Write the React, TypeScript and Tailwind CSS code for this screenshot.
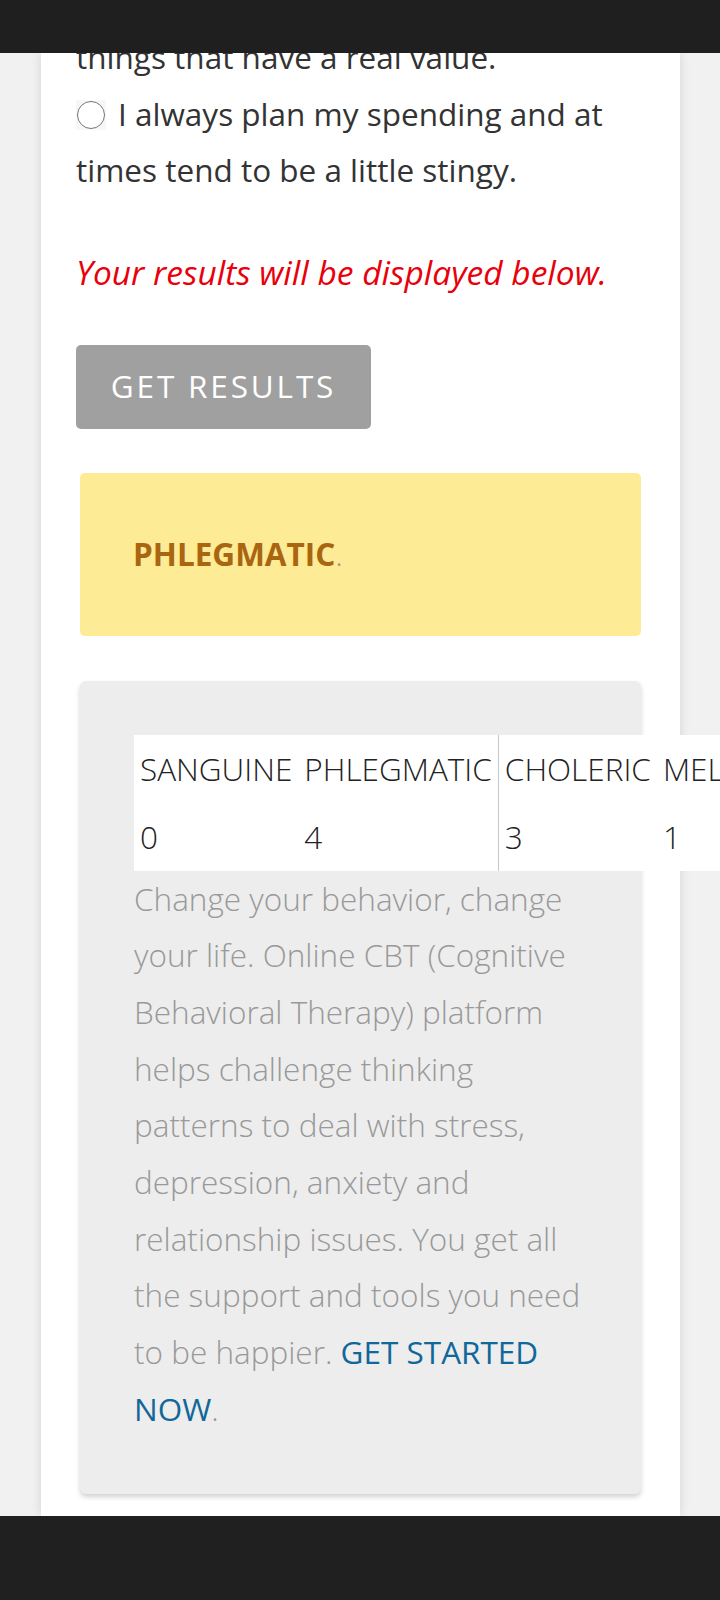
const font = { fontFamily: '"Open Sans", "Noto Sans", sans-serif' };

type Temperament = {
  name: string;
  score: number;
  divider?: boolean;
};

const temperaments: Temperament[] = [
  { name: "SANGUINE", score: 0 },
  { name: "PHLEGMATIC", score: 4 },
  { name: "CHOLERIC", score: 3, divider: true },
  { name: "MELANCHOLIC", score: 1 },
];

export default function App() {
  return (
    <div
      className="flex h-[1600px] w-[720px] flex-col overflow-hidden bg-[#f1f1f1]"
      style={font}
    >
      {/* status bar */}
      <div className="relative z-10 h-[53px] shrink-0 bg-[#1f1f1f]" />

      <div className="flex min-h-0 flex-1 pl-[41px] pr-[40px]">
        <div className="w-full overflow-visible bg-white shadow-[0_0_10px_rgba(0,0,0,0.12)]">
          <div className="-mt-[24px] px-[35px] text-[31.5px] leading-[56.7px] text-[#333]">
            <p>things that have a real value.</p>

            <label className="block">
              <span className="mr-[12px] inline-flex h-[30px] w-[30px] translate-y-[3px] items-center justify-center bg-[#f7f7f7] align-baseline">
                <span className="h-[28px] w-[28px] rounded-full border-[1.5px] border-[#767676] bg-white" />
              </span>
              I always plan my spending and at times tend to be a little
              stingy.
            </label>

            <p className="mt-[45px] text-[33.5px] italic text-[#e8000b]">
              Your results will be displayed below.
            </p>

            <button className="mt-[44px] h-[84px] w-[295px] rounded-[5px] bg-[#a0a0a0] text-[31.5px] tracking-[0.09em] text-white">
              GET RESULTS
            </button>
          </div>

          <div className="mt-[44px] px-[39px]">
            <div className="rounded-[5px] bg-[#fdeb96] px-[53px] py-[53px] text-[31.5px] leading-[56.7px]">
              <span className="font-bold text-[#a9650f]">PHLEGMATIC</span>
              <span className="font-light text-[#999]">.</span>
            </div>

            <div className="mt-[45px] rounded-[6px] bg-[#ededed] px-[54px] pt-[54px] pb-[56px] shadow-[0_3px_5px_rgba(0,0,0,0.18)]">
              <table className="w-max bg-white text-[31.5px] font-light text-[#222]">
                <tbody>
                  <tr>
                    {temperaments.map((t) => (
                      <td
                        key={t.name}
                        className={
                          t.divider
                            ? "h-[68px] whitespace-nowrap border-l border-[#c8c8c8] px-[6px] align-middle"
                            : "h-[68px] whitespace-nowrap px-[6px] align-middle"
                        }
                      >
                        {t.name}
                      </td>
                    ))}
                  </tr>
                  <tr>
                    {temperaments.map((t) => (
                      <td
                        key={t.name}
                        className={
                          t.divider
                            ? "h-[68px] border-l border-[#c8c8c8] px-[6px] align-middle"
                            : "h-[68px] px-[6px] align-middle"
                        }
                      >
                        {t.score}
                      </td>
                    ))}
                  </tr>
                </tbody>
              </table>

              <p className="text-[31.5px] font-light leading-[56.7px] text-[#999]">
                Change your behavior, change your life. Online CBT (Cognitive
                Behavioral Therapy) platform helps challenge thinking patterns
                to deal with stress, depression, anxiety and relationship
                issues. You get all the support and tools you need to be
                happier.{" "}
                <a className="font-normal text-[#10679a]" href="#">
                  GET STARTED NOW
                </a>
                .
              </p>
            </div>
          </div>
        </div>
      </div>

      {/* nav bar */}
      <div className="relative z-10 h-[84px] shrink-0 bg-[#202020]" />
    </div>
  );
}
